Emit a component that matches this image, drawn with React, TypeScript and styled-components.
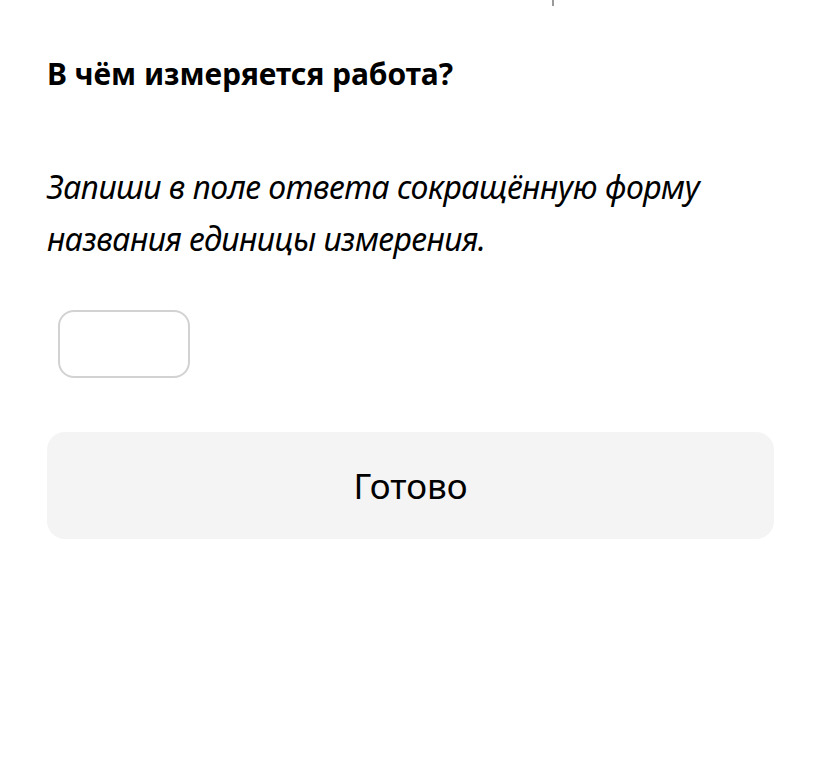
import React from 'react'
import styled, { createGlobalStyle } from 'styled-components'

const GlobalStyle = createGlobalStyle`
  html, body {
    margin: 0;
    padding: 0;
    background: #ffffff;
  }
  body {
    font-family: 'Noto Sans', 'Liberation Sans', sans-serif;
    color: #000000;
  }
`

const Page = styled.div`
  position: relative;
  width: 821px;
  height: 763px;
  box-sizing: border-box;
  padding: 56px 47px 0 47px;
  display: flex;
  flex-direction: column;
`

const TopTick = styled.div`
  position: absolute;
  top: 0;
  left: 552px;
  width: 2px;
  height: 6px;
  background: #9a9a9a;
`

const Title = styled.h1`
  margin: 0;
  font-size: 30px;
  font-weight: 700;
  line-height: 36px;
  letter-spacing: -0.05px;
`

const Hint = styled.p`
  margin: 69px 0 0 0;
  font-size: 32px;
  font-style: italic;
  font-weight: 400;
  line-height: 52px;
  letter-spacing: -0.5px;
`

const AnswerInput = styled.input`
  margin: 45px 0 0 11px;
  width: 132px;
  height: 68px;
  box-sizing: border-box;
  border: 2px solid #d2d2d2;
  border-radius: 16px;
  background: #ffffff;
  outline: none;
`

const DoneButton = styled.button`
  margin-top: 54px;
  width: 727px;
  height: 107px;
  border: none;
  border-radius: 18px;
  background: #f4f4f4;
  font-family: 'Noto Sans', 'Liberation Sans', sans-serif;
  font-size: 35px;
  color: #000000;
  cursor: pointer;
`

export default function App() {
  return (
    <>
      <GlobalStyle />
      <Page>
        <TopTick />
        <Title>В чём измеряется работа?</Title>
        <Hint>
          Запиши в поле ответа сокращённую форму
          <br />
          названия единицы измерения.
        </Hint>
        <AnswerInput type='text' />
        <DoneButton>Готово</DoneButton>
      </Page>
    </>
  )
}
